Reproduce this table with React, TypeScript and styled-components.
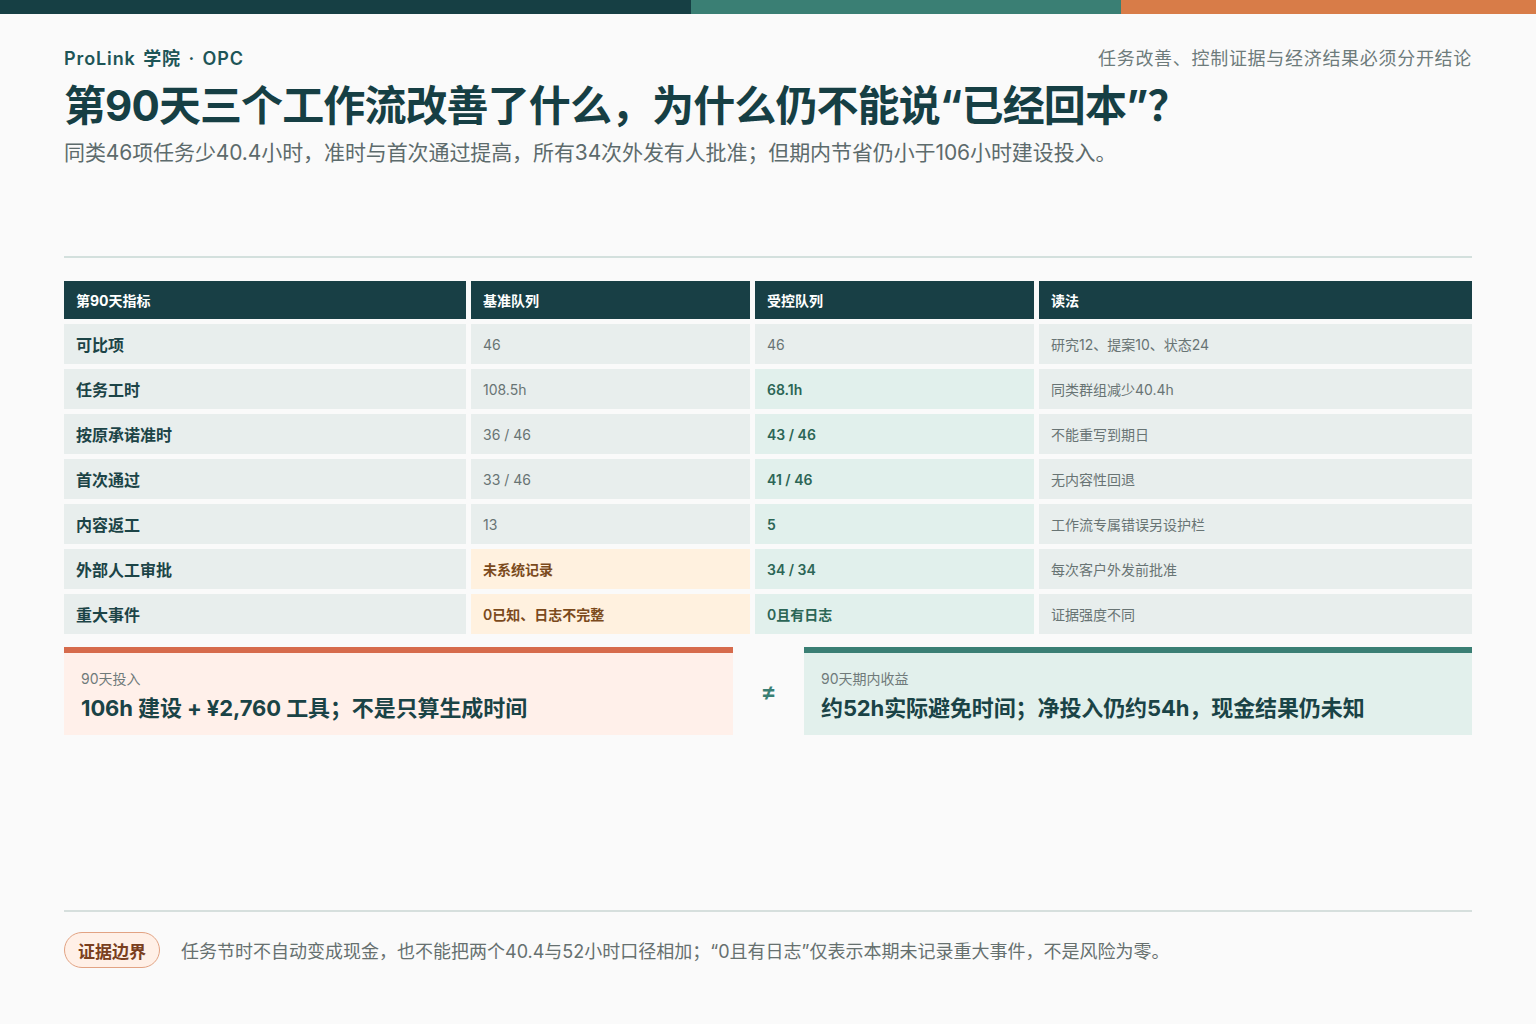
import React from "react";
import styled, { createGlobalStyle } from "styled-components";

const Global = createGlobalStyle`
  html, body { margin: 0; padding: 0; background: #fafafa; }
  body { font-family: Inter, "Noto Sans CJK SC", sans-serif; color: #163f44; }
  * { box-sizing: border-box; }
`;

const Page = styled.div`
  width: 1536px;
  min-height: 1024px;
  display: flex;
  flex-direction: column;
  background: #fafafa;
`;

const TopBar = styled.div`
  display: grid;
  grid-template-columns: 691px 430px 1fr;
  height: 14px;
`;

const Seg = styled.div<{ $c: string }>`
  background: ${(p) => p.$c};
`;

const Body = styled.div`
  flex: 1;
  display: flex;
  flex-direction: column;
  padding: 31px 64px 56px;
`;

const HeaderRow = styled.div`
  display: flex;
  justify-content: space-between;
  align-items: center;
  height: 24px;
`;

const Brand = styled.div`
  font-size: 18px;
  font-weight: 600;
  color: #1d5557;
  letter-spacing: 0.9px;
  word-spacing: 2px;
`;

const Kicker = styled.div`
  font-size: 18px;
  color: #6d7b7b;
  letter-spacing: 0.7px;
`;

const Title = styled.h1`
  margin: 11px 0 0;
  font-family: Inter, "Noto Sans CJK SC", sans-serif;
  font-size: 42px;
  line-height: 52px;
  font-weight: 700;
  color: #163f44;
  letter-spacing: -0.9px;
`;

const Subtitle = styled.p`
  margin: 7px 0 0;
  font-size: 21px;
  line-height: 28px;
  color: #5d6b6c;
  letter-spacing: -0.1px;
`;

const Divider = styled.div`
  height: 2px;
  background: #d3e0dd;
  margin-top: 89px;
`;

const Table = styled.div`
  margin-top: 23px;
  display: grid;
  grid-template-columns: 402px 279px 279px 1fr;
  gap: 5px;
`;

const HeadCell = styled.div`
  background: #183f45;
  color: #ffffff;
  height: 38px;
  display: flex;
  align-items: center;
  padding: 0 12px;
  font-size: 14px;
  font-weight: 700;
`;

type Tone = "label" | "base" | "ctrl" | "warn" | "read";

const Cell = styled.div<{ $tone: Tone }>`
  height: 40px;
  display: flex;
  align-items: center;
  padding: 0 12px;
  font-size: ${(p) => (p.$tone === "label" ? "16px" : "14px")};
  font-weight: ${(p) =>
    p.$tone === "label" || p.$tone === "warn" || p.$tone === "ctrl" ? 600 : 400};
  background: ${(p) =>
    p.$tone === "ctrl" ? "#e1f0ec" : p.$tone === "warn" ? "#fff1df" : "#e8eeed"};
  color: ${(p) =>
    p.$tone === "label"
      ? "#1c4447"
      : p.$tone === "ctrl"
      ? "#2c6656"
      : p.$tone === "warn"
      ? "#7b4a1c"
      : "#687474"};
`;

const Compare = styled.div`
  margin-top: 13px;
  display: grid;
  grid-template-columns: 669px 1fr 668px;
  align-items: center;
`;

const Card = styled.div<{ $accent: string; $bg: string }>`
  background: ${(p) => p.$bg};
  border-top: 6px solid ${(p) => p.$accent};
  height: 88px;
  padding: 16px 17px 0;
  display: flex;
  flex-direction: column;
`;

const CardLabel = styled.div`
  font-size: 14px;
  line-height: 20px;
  color: #6f7a7a;
`;

const CardValue = styled.div`
  margin-top: 5px;
  font-size: 22px;
  line-height: 29px;
  font-weight: 700;
  color: #1a4346;
  letter-spacing: -0.1px;
`;

const NotEq = styled.div`
  text-align: center;
  font-size: 24px;
  font-weight: 600;
  color: #3a7f74;
`;

const Footer = styled.div`
  margin-top: auto;
  border-top: 2px solid #d6dfdd;
  padding-top: 20px;
  display: flex;
  align-items: center;
  gap: 21px;
`;

const Pill = styled.div`
  height: 36px;
  padding: 0 13px;
  border: 1px solid #e2a383;
  background: #fff0e7;
  border-radius: 18px;
  display: flex;
  align-items: center;
  font-size: 17px;
  font-weight: 700;
  color: #7a3f1e;
`;

const FootText = styled.div`
  font-size: 18px;
  color: #66706f;
`;

const rows: { label: string; base: string; baseTone: Tone; ctrl: string; ctrlTone: Tone; read: string }[] = [
  { label: "可比项", base: "46", baseTone: "base", ctrl: "46", ctrlTone: "base", read: "研究12、提案10、状态24" },
  { label: "任务工时", base: "108.5h", baseTone: "base", ctrl: "68.1h", ctrlTone: "ctrl", read: "同类群组减少40.4h" },
  { label: "按原承诺准时", base: "36 / 46", baseTone: "base", ctrl: "43 / 46", ctrlTone: "ctrl", read: "不能重写到期日" },
  { label: "首次通过", base: "33 / 46", baseTone: "base", ctrl: "41 / 46", ctrlTone: "ctrl", read: "无内容性回退" },
  { label: "内容返工", base: "13", baseTone: "base", ctrl: "5", ctrlTone: "ctrl", read: "工作流专属错误另设护栏" },
  { label: "外部人工审批", base: "未系统记录", baseTone: "warn", ctrl: "34 / 34", ctrlTone: "ctrl", read: "每次客户外发前批准" },
  { label: "重大事件", base: "0已知、日志不完整", baseTone: "warn", ctrl: "0且有日志", ctrlTone: "ctrl", read: "证据强度不同" },
];

export default function App() {
  return (
    <Page>
      <Global />
      <TopBar>
        <Seg $c="#163f44" />
        <Seg $c="#3a7f74" />
        <Seg $c="#d87c48" />
      </TopBar>
      <Body>
        <HeaderRow>
          <Brand>ProLink 学院 · OPC</Brand>
          <Kicker>任务改善、控制证据与经济结果必须分开结论</Kicker>
        </HeaderRow>
        <Title>第90天三个工作流改善了什么，为什么仍不能说“已经回本”？</Title>
        <Subtitle>
          同类46项任务少40.4小时，准时与首次通过提高，所有34次外发有人批准；但期内节省仍小于106小时建设投入。
        </Subtitle>
        <Divider />
        <Table>
          <HeadCell>第90天指标</HeadCell>
          <HeadCell>基准队列</HeadCell>
          <HeadCell>受控队列</HeadCell>
          <HeadCell>读法</HeadCell>
          {rows.map((r) => (
            <React.Fragment key={r.label}>
              <Cell $tone="label">{r.label}</Cell>
              <Cell $tone={r.baseTone}>{r.base}</Cell>
              <Cell $tone={r.ctrlTone}>{r.ctrl}</Cell>
              <Cell $tone="read">{r.read}</Cell>
            </React.Fragment>
          ))}
        </Table>
        <Compare>
          <Card $accent="#d66b4c" $bg="#fff0ea">
            <CardLabel>90天投入</CardLabel>
            <CardValue>106h 建设 + ¥2,760 工具；不是只算生成时间</CardValue>
          </Card>
          <NotEq>≠</NotEq>
          <Card $accent="#3a7f74" $bg="#e2f0ec">
            <CardLabel>90天期内收益</CardLabel>
            <CardValue>约52h实际避免时间；净投入仍约54h，现金结果仍未知</CardValue>
          </Card>
        </Compare>
        <Footer>
          <Pill>证据边界</Pill>
          <FootText>
            任务节时不自动变成现金，也不能把两个40.4与52小时口径相加；“0且有日志”仅表示本期未记录重大事件，不是风险为零。
          </FootText>
        </Footer>
      </Body>
    </Page>
  );
}
